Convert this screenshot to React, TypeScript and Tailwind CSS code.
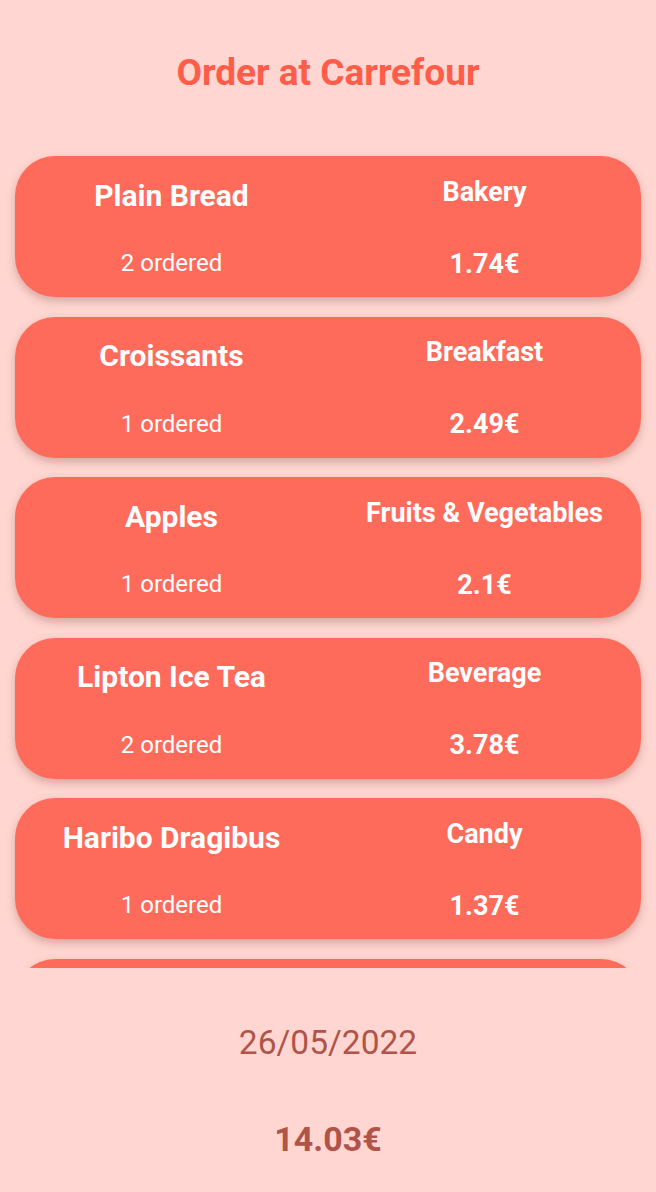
const ITEMS = [
  { name: 'Plain Bread', category: 'Bakery', qty: 2, price: '1.74€' },
  { name: 'Croissants', category: 'Breakfast', qty: 1, price: '2.49€' },
  { name: 'Apples', category: 'Fruits & Vegetables', qty: 1, price: '2.1€' },
  { name: 'Lipton Ice Tea', category: 'Beverage', qty: 2, price: '3.78€' },
  { name: 'Haribo Dragibus', category: 'Candy', qty: 1, price: '1.37€' },
];

export default function App() {
  return (
    <div
      className="h-[1192px] w-full bg-[#ffd6d1] flex flex-col overflow-hidden"
      style={{ fontFamily: 'Roboto, "Noto Sans", sans-serif' }}
    >
      {/* Header */}
      <div className="h-[136px] shrink-0 flex justify-center pt-[52px]">
        <h1 className="text-[37px] leading-[42px] font-bold text-[#ff5c4a]">Order at Carrefour</h1>
      </div>

      <div className="h-[832px] shrink-0 overflow-hidden">
        <div className="flex flex-col gap-[19.5px] px-[15px] pt-5 pb-6">
          {ITEMS.map(item => (
            <div
              key={item.name}
              className="h-[141px] shrink-0 rounded-[40px] bg-[#ff6b5b] grid grid-cols-2 text-white shadow-[0_4px_8px_rgba(120,60,50,0.3)]"
            >
              <div className="flex flex-col items-center">
                <div className="h-[78px] flex items-center text-[30px] font-bold">{item.name}</div>
                <div className="h-[58px] flex items-center text-[24px]">{item.qty} ordered</div>
              </div>
              <div className="flex flex-col items-center">
                <div className="h-[72px] flex items-center text-[27px] font-bold">{item.category}</div>
                <div className="h-[72px] flex items-center text-[27px] font-bold">{item.price}</div>
              </div>
            </div>
          ))}
          <div className="h-[141px] shrink-0 rounded-[40px] bg-[#ff6b5b] shadow-[0_4px_8px_rgba(120,60,50,0.3)]" />
        </div>
      </div>

      {/* Footer */}
      <div className="flex-1 flex flex-col items-center text-[#b0544a]">
        <div className="h-[150px] flex items-center text-[33.5px]">26/05/2022</div>
        <div className="h-[42px] flex items-center text-[34px] font-bold">14.03€</div>
      </div>
    </div>
  );
}
